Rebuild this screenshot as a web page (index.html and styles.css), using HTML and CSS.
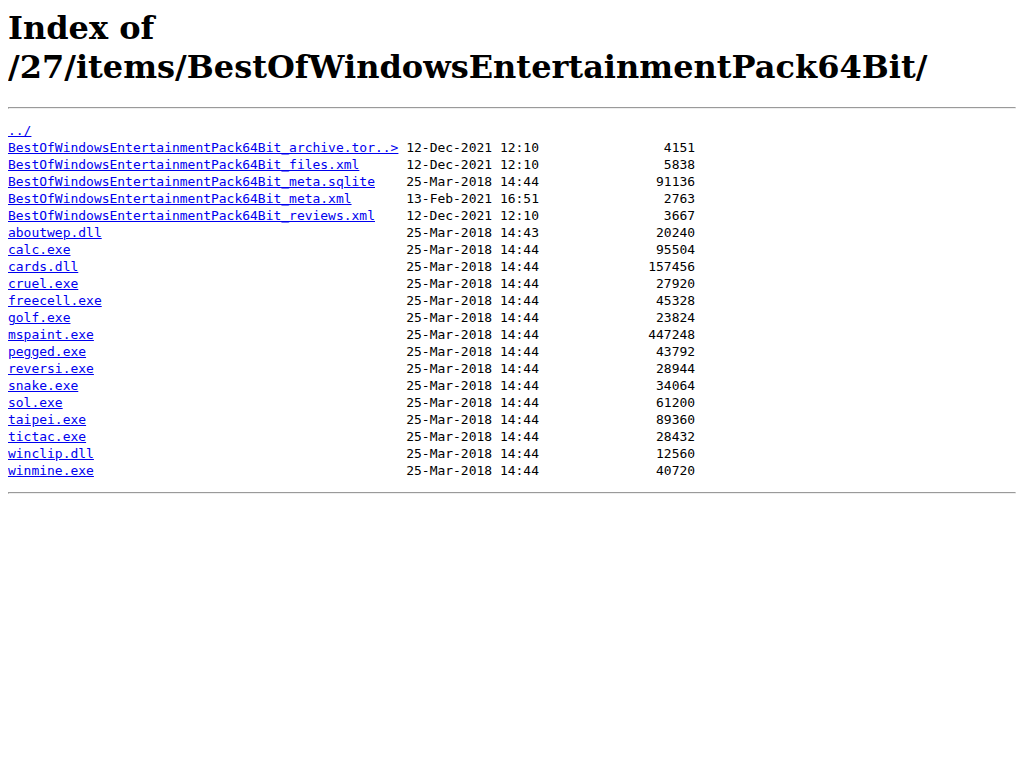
FILE: index.html
```html
<!DOCTYPE html>
<html>
<head>
<meta charset="utf-8">
<title>Index of /27/items/BestOfWindowsEntertainmentPack64Bit/</title>
<link rel="stylesheet" href="styles.css">
</head>
<body>
<h1 class="title">Index of /27/items/BestOfWindowsEntertainmentPack64Bit/</h1><hr class="rule"><pre class="listing"><a href="../">../</a>
<a href="BestOfWindowsEntertainmentPack64Bit_archive.torrent">BestOfWindowsEntertainmentPack64Bit_archive.tor..&gt;</a> 12-Dec-2021 12:10                4151
<a href="BestOfWindowsEntertainmentPack64Bit_files.xml">BestOfWindowsEntertainmentPack64Bit_files.xml</a>      12-Dec-2021 12:10                5838
<a href="BestOfWindowsEntertainmentPack64Bit_meta.sqlite">BestOfWindowsEntertainmentPack64Bit_meta.sqlite</a>    25-Mar-2018 14:44               91136
<a href="BestOfWindowsEntertainmentPack64Bit_meta.xml">BestOfWindowsEntertainmentPack64Bit_meta.xml</a>       13-Feb-2021 16:51                2763
<a href="BestOfWindowsEntertainmentPack64Bit_reviews.xml">BestOfWindowsEntertainmentPack64Bit_reviews.xml</a>    12-Dec-2021 12:10                3667
<a href="aboutwep.dll">aboutwep.dll</a>                                       25-Mar-2018 14:43               20240
<a href="calc.exe">calc.exe</a>                                           25-Mar-2018 14:44               95504
<a href="cards.dll">cards.dll</a>                                          25-Mar-2018 14:44              157456
<a href="cruel.exe">cruel.exe</a>                                          25-Mar-2018 14:44               27920
<a href="freecell.exe">freecell.exe</a>                                       25-Mar-2018 14:44               45328
<a href="golf.exe">golf.exe</a>                                           25-Mar-2018 14:44               23824
<a href="mspaint.exe">mspaint.exe</a>                                        25-Mar-2018 14:44              447248
<a href="pegged.exe">pegged.exe</a>                                         25-Mar-2018 14:44               43792
<a href="reversi.exe">reversi.exe</a>                                        25-Mar-2018 14:44               28944
<a href="snake.exe">snake.exe</a>                                          25-Mar-2018 14:44               34064
<a href="sol.exe">sol.exe</a>                                            25-Mar-2018 14:44               61200
<a href="taipei.exe">taipei.exe</a>                                         25-Mar-2018 14:44               89360
<a href="tictac.exe">tictac.exe</a>                                         25-Mar-2018 14:44               28432
<a href="winclip.dll">winclip.dll</a>                                        25-Mar-2018 14:44               12560
<a href="winmine.exe">winmine.exe</a>                                        25-Mar-2018 14:44               40720
</pre><hr class="rule">
</body>
</html>
```

FILE: styles.css
```css
html {
  background: #ffffff;
}

body {
  margin: 8px;
  color: #000000;
  font-family: "DejaVu Serif", serif;
}

.title {
  margin: 0 0 20.44px;
  padding-top: 1px;
  font-family: "DejaVu Serif", serif;
  font-size: 32px;
  font-weight: bold;
  line-height: 39px;
}

.rule {
  margin: 8px 0;
}

.listing {
  margin: 13px 0;
  font-family: "DejaVu Sans Mono", monospace;
  font-size: 12.97px;
  line-height: 17px;
}

.listing a {
  color: #0000ee;
}
```
